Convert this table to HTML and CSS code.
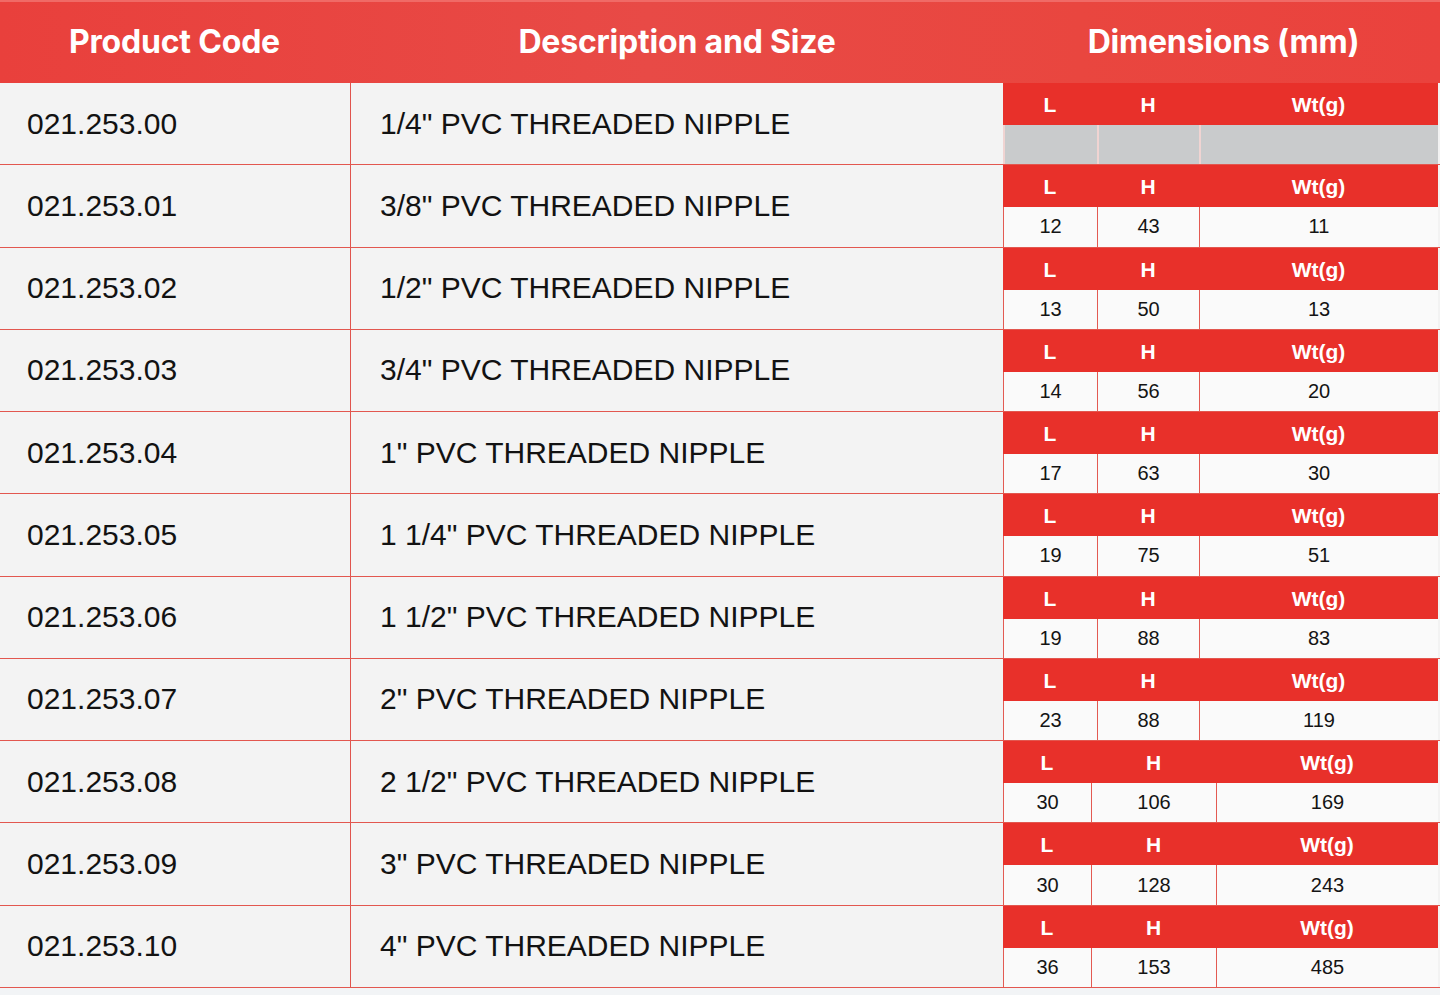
FILE: index.html
```html
<!DOCTYPE html>
<html>
<head>
<meta charset="utf-8">
<link rel="stylesheet" href="styles.css">
</head>
<body>
<div class="table">
  <div class="head">
    <div class="hc c1">Product Code</div>
    <div class="hc c2">Description and Size</div>
    <div class="hc c3">Dimensions (mm)</div>
  </div>

  <div class="row">
    <div class="code">021.253.00</div>
    <div class="desc">1/4" PVC THREADED NIPPLE</div>
    <div class="dims">
      <div class="dh">L</div><div class="dh">H</div><div class="dh">Wt(g)</div>
      <div class="dv empty"></div><div class="dv empty"></div><div class="dv empty"></div>
    </div>
  </div>
  <div class="row">
    <div class="code">021.253.01</div>
    <div class="desc">3/8" PVC THREADED NIPPLE</div>
    <div class="dims">
      <div class="dh">L</div><div class="dh">H</div><div class="dh">Wt(g)</div>
      <div class="dv">12</div><div class="dv">43</div><div class="dv">11</div>
    </div>
  </div>
  <div class="row">
    <div class="code">021.253.02</div>
    <div class="desc">1/2" PVC THREADED NIPPLE</div>
    <div class="dims">
      <div class="dh">L</div><div class="dh">H</div><div class="dh">Wt(g)</div>
      <div class="dv">13</div><div class="dv">50</div><div class="dv">13</div>
    </div>
  </div>
  <div class="row">
    <div class="code">021.253.03</div>
    <div class="desc">3/4" PVC THREADED NIPPLE</div>
    <div class="dims">
      <div class="dh">L</div><div class="dh">H</div><div class="dh">Wt(g)</div>
      <div class="dv">14</div><div class="dv">56</div><div class="dv">20</div>
    </div>
  </div>
  <div class="row">
    <div class="code">021.253.04</div>
    <div class="desc">1" PVC THREADED NIPPLE</div>
    <div class="dims">
      <div class="dh">L</div><div class="dh">H</div><div class="dh">Wt(g)</div>
      <div class="dv">17</div><div class="dv">63</div><div class="dv">30</div>
    </div>
  </div>
  <div class="row">
    <div class="code">021.253.05</div>
    <div class="desc">1 1/4" PVC THREADED NIPPLE</div>
    <div class="dims">
      <div class="dh">L</div><div class="dh">H</div><div class="dh">Wt(g)</div>
      <div class="dv">19</div><div class="dv">75</div><div class="dv">51</div>
    </div>
  </div>
  <div class="row">
    <div class="code">021.253.06</div>
    <div class="desc">1 1/2" PVC THREADED NIPPLE</div>
    <div class="dims">
      <div class="dh">L</div><div class="dh">H</div><div class="dh">Wt(g)</div>
      <div class="dv">19</div><div class="dv">88</div><div class="dv">83</div>
    </div>
  </div>
  <div class="row">
    <div class="code">021.253.07</div>
    <div class="desc">2" PVC THREADED NIPPLE</div>
    <div class="dims">
      <div class="dh">L</div><div class="dh">H</div><div class="dh">Wt(g)</div>
      <div class="dv">23</div><div class="dv">88</div><div class="dv">119</div>
    </div>
  </div>
  <div class="row">
    <div class="code">021.253.08</div>
    <div class="desc">2 1/2" PVC THREADED NIPPLE</div>
    <div class="dims wide">
      <div class="dh">L</div><div class="dh">H</div><div class="dh">Wt(g)</div>
      <div class="dv">30</div><div class="dv">106</div><div class="dv">169</div>
    </div>
  </div>
  <div class="row">
    <div class="code">021.253.09</div>
    <div class="desc">3" PVC THREADED NIPPLE</div>
    <div class="dims wide">
      <div class="dh">L</div><div class="dh">H</div><div class="dh">Wt(g)</div>
      <div class="dv">30</div><div class="dv">128</div><div class="dv">243</div>
    </div>
  </div>
  <div class="row">
    <div class="code">021.253.10</div>
    <div class="desc">4" PVC THREADED NIPPLE</div>
    <div class="dims wide">
      <div class="dh">L</div><div class="dh">H</div><div class="dh">Wt(g)</div>
      <div class="dv">36</div><div class="dv">153</div><div class="dv">485</div>
    </div>
  </div>
</div>
</body>
</html>
```

FILE: styles.css
```css
html, body {
  margin: 0;
  padding: 0;
  background: #f2f4f6;
  font-family: "Liberation Sans", Arial, sans-serif;
}

.table {
  width: 1440px;
  display: flex;
  flex-direction: column;
}

.head {
  height: 83px;
  display: grid;
  grid-template-columns: 351px 652px 1fr;
  background: linear-gradient(90deg, #e9403c 0%, #e84a46 45%, #e9463f 75%, #ea423d 100%);
  border-top: 2px solid #f06a66;
  box-sizing: border-box;
}

.hc {
  display: flex;
  align-items: center;
  justify-content: center;
  color: #ffffff;
  font-family: Inter, "Liberation Sans", sans-serif;
  font-weight: 700;
  font-size: 32px;
  letter-spacing: -0.2px;
  padding-bottom: 2px;
}

.hc.c1 { padding-right: 2px; }
.hc.c3 { padding-left: 4px; }

.row {
  height: 82.27px;
  display: grid;
  grid-template-columns: 351px 652px 1fr;
  background: #f3f3f3;
  border-bottom: 1px solid #e2574f;
  box-sizing: border-box;
}

.code {
  display: flex;
  align-items: center;
  padding-left: 27px;
  font-size: 30px;
  color: #121212;
  border-right: 1px solid #e0544d;
}

.desc {
  display: flex;
  align-items: center;
  padding-left: 29px;
  font-size: 30px;
  color: #121212;
}

.dims {
  display: grid;
  grid-template-columns: 94px 102px 1fr;
  grid-template-rows: 42px 1fr;
  margin-right: 2px;
}

.dims.wide {
  grid-template-columns: 88px 125px 1fr;
}

.dh {
  display: flex;
  align-items: center;
  justify-content: center;
  background: #e8302a;
  color: #ffffff;
  font-weight: 700;
  font-size: 21px;
  padding-top: 2px;
}

.dv {
  display: flex;
  align-items: center;
  justify-content: center;
  background: #fafafa;
  color: #141414;
  font-size: 20px;
  border-left: 1px solid #e35a52;
  box-sizing: border-box;
}

.dv.empty {
  background: #c9cbcc;
  border-left: 2px solid #f0d4d2;
}
```
